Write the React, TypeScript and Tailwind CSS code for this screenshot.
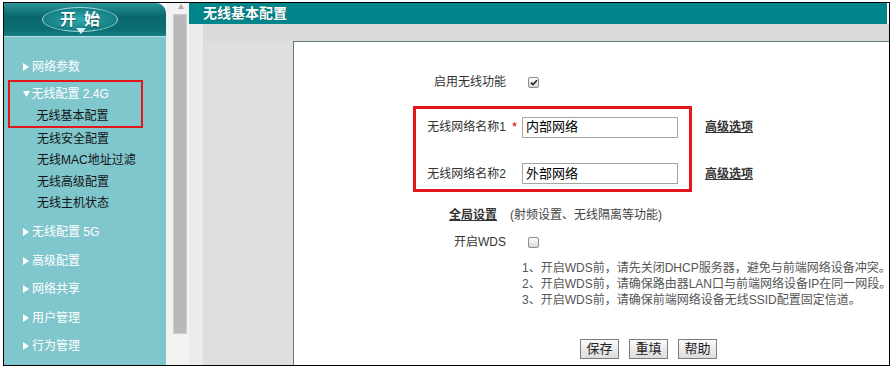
import React from "react";

const TriRight = () => (
  <svg width="6" height="8" viewBox="0 0 6 8" className="shrink-0">
    <path d="M0 0L6 4L0 8Z" fill="#ffffff" />
  </svg>
);

const TriDown = () => (
  <svg width="7" height="6" viewBox="0 0 7 6" className="shrink-0">
    <path d="M0 0H7L3.5 6Z" fill="#ffffff" />
  </svg>
);

const CheckBox = ({ checked }: { checked?: boolean }) => (
  <span className="ml-[22px] w-[11px] h-[11px] border border-[#8c8c8c] rounded-[2px] bg-[linear-gradient(#fefefe,#d9d9d9)] flex items-center justify-center">
    {checked && (
      <svg width="8" height="7" viewBox="0 0 8 7">
        <path d="M1 3.6L3 5.6L7 1.2" stroke="#2a2a2a" strokeWidth="1.7" fill="none" />
      </svg>
    )}
  </span>
);

const MainItem = ({ label }: { label: string }) => (
  <div className="h-[28.5px] flex items-center pl-[19px] gap-[3px] text-white text-[12px]">
    <TriRight />
    <span>{label}</span>
  </div>
);

const SubItem = ({ label }: { label: string }) => (
  <div className="h-[21.5px] flex items-center pl-[33px] text-[#141414] text-[12px]">{label}</div>
);

const Btn = ({ label }: { label: string }) => (
  <div className="w-[39px] h-[20px] border border-[#7d7d7d] bg-[linear-gradient(#fbfbfb,#dcdcdc)] text-[13px] text-[#222] flex items-center justify-center">
    {label}
  </div>
);

export default function App() {
  return (
    <div className="w-[892px] h-[370px] bg-white font-['Liberation_Sans','Noto_Sans_CJK_SC',sans-serif] pt-[2px] pl-[3px]">
      <div className="w-[887px] h-[364px] border border-black flex overflow-hidden bg-white">
        {/* Sidebar */}
        <div className="w-[162px] shrink-0 flex flex-col bg-[#7fc6cd] rounded-tr-[10px] overflow-hidden">
          <div className="h-[34px] shrink-0 border-b border-[#b9dfe2] bg-[linear-gradient(to_bottom,#2a9599,#0a676c_40%,#0b6e73_80%,#157f83)] pt-[4px]">
            <div className="ml-[38px] w-[76px] h-[25px] rounded-[50%] border border-[#9fd6d8] bg-[radial-gradient(ellipse_at_center,#31a9ad,#137f84_70%,#0d7075)] relative flex items-center justify-center text-white font-bold text-[16px] [text-shadow:0_1px_1px_#0a4a4d]">
              <span>开</span>
              <span className="ml-[8px]">始</span>
              <svg width="10" height="6" viewBox="0 0 10 6" className="absolute left-[33px] bottom-[-3px]">
                <path d="M0 0H10L5 6Z" fill="#d8f0f0" />
              </svg>
            </div>
          </div>
          <div className="flex flex-col pt-[16px]">
            <div className="h-[27px] flex items-center pl-[19px] gap-[3px] text-white text-[12px]">
              <TriRight />
              <span>网络参数</span>
            </div>
            <div className="ml-[4px] w-[135px] border-[2.5px] border-[#e3161c] flex flex-col">
              <div className="h-[23px] flex items-center pl-[12.5px] gap-[2px] text-white text-[12px]">
                <TriDown />
                <span>无线配置 2.4G</span>
              </div>
              <div className="h-[21px] flex items-center pl-[26.5px] text-[#141414] text-[12px]">无线基本配置</div>
            </div>
            <SubItem label="无线安全配置" />
            <SubItem label="无线MAC地址过滤" />
            <SubItem label="无线高级配置" />
            <SubItem label="无线主机状态" />
            <div className="h-[4px]" />
            <MainItem label="无线配置 5G" />
            <MainItem label="高级配置" />
            <MainItem label="网络共享" />
            <MainItem label="用户管理" />
            <MainItem label="行为管理" />
          </div>
        </div>

        {/* Scrollbar */}
        <div className="w-[23px] shrink-0 bg-[#f2f2f2] flex flex-col">
          <div className="h-[11px] flex items-start pl-[12px] pt-[1px]">
            <svg width="6" height="5" viewBox="0 0 6 5">
              <path d="M0 5L3 0L6 5Z" fill="#b9a4aa" />
            </svg>
          </div>
          <div className="ml-[7px] w-[14px] h-[320px] bg-[#b9b9b9] border border-[#cdcdcd]" />
        </div>

        {/* Main */}
        <div className="flex-1 flex flex-col mr-[2px] min-w-0">
          <div className="h-[21px] shrink-0 bg-[#00868a] text-white font-bold text-[14px] pl-[14px] flex items-center [text-shadow:0_0_1px_#004a4d]">
            无线基本配置
          </div>
          <div className="flex-1 flex">
            <div className="w-[14px] shrink-0 bg-[#ebebeb]" />
            <div className="flex-1 flex flex-col bg-[#d9d9d9]">
              <div className="h-[17px] shrink-0" />
              <div className="flex-1 flex">
                <div className="w-[90px] shrink-0 bg-[#dedede]" />
                <div className="flex-1 bg-white border-l border-t border-[#5d7b7c] flex flex-col text-[12px] text-[#333] whitespace-nowrap">
                  <div className="mt-[30px] ml-[119px] h-[20px] flex items-center">
                    <div className="w-[93px] text-right">启用无线功能</div>
                    <CheckBox checked />
                  </div>

                  <div className="mt-[14px] ml-[119px] flex items-start">
                    <div className="w-[279px] h-[86px] border-[3px] border-[#e3161c] flex flex-col">
                      <div className="mt-[7.5px] h-[21px] flex items-center">
                        <div className="w-[90px] text-right">无线网络名称1</div>
                        <div className="w-[16px] pl-[6px] text-[#e00000] text-[13px] leading-none pb-[2px]">*</div>
                        <div className="w-[156px] h-[21px] border border-[#a5a5a5] pl-[3px] text-[13px] text-black flex items-center">
                          内部网络
                        </div>
                      </div>
                      <div className="mt-[25.5px] h-[21px] flex items-center">
                        <div className="w-[90px] text-right">无线网络名称2</div>
                        <div className="w-[16px]" />
                        <div className="w-[156px] h-[21px] border border-[#a5a5a5] pl-[3px] text-[13px] text-black flex items-center">
                          外部网络
                        </div>
                      </div>
                    </div>
                    <div className="ml-[13px] flex flex-col">
                      <div className="mt-[11px] h-[20px] flex items-center font-bold underline text-[#333]">高级选项</div>
                      <div className="mt-[26.5px] h-[20px] flex items-center font-bold underline text-[#333]">高级选项</div>
                    </div>
                  </div>

                  <div className="mt-[13px] ml-[155px] h-[20px] flex items-center">
                    <span className="font-bold underline text-[#333]">全局设置</span>
                    <span className="ml-[13px] text-[#444]">(射频设置、无线隔离等功能)</span>
                  </div>

                  <div className="mt-[7px] ml-[119px] h-[20px] flex items-center">
                    <div className="w-[93px] text-right">开启WDS</div>
                    <CheckBox />
                  </div>

                  <div className="mt-[8px] ml-[228px] flex flex-col leading-[16px] text-[#555]">
                    <div>1、开启WDS前，请先关闭DHCP服务器，避免与前端网络设备冲突。</div>
                    <div>2、开启WDS前，请确保路由器LAN口与前端网络设备IP在同一网段。</div>
                    <div>3、开启WDS前，请确保前端网络设备无线SSID配置固定信道。</div>
                  </div>

                  <div className="mt-[31px] ml-[286px] flex gap-[10px]">
                    <Btn label="保存" />
                    <Btn label="重填" />
                    <Btn label="帮助" />
                  </div>
                </div>
              </div>
            </div>
          </div>
        </div>
      </div>
    </div>
  );
}
